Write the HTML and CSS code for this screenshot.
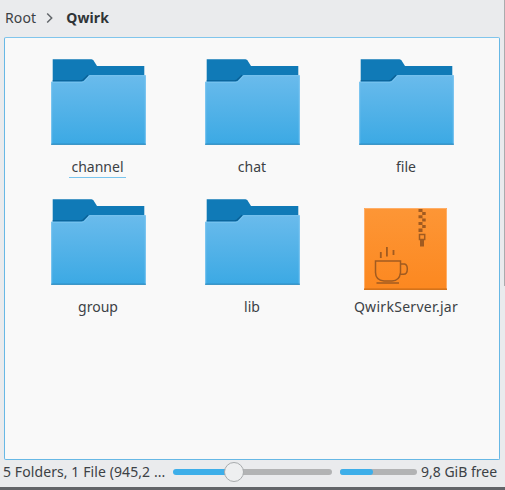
FILE: index.html
```html
<!DOCTYPE html>
<html lang="en">
<head>
<meta charset="utf-8">
<title>Qwirk</title>
<link rel="stylesheet" href="styles.css">
</head>
<body>
<svg class="defs" aria-hidden="true">
  <defs>
    <linearGradient id="blue" x1="0" y1="0" x2="0" y2="1"><stop offset="0" stop-color="#6abbec"/><stop offset="1" stop-color="#3ba9e4"/></linearGradient>
    <linearGradient id="orange" x1="0" y1="0" x2="0" y2="1"><stop offset="0" stop-color="#fd9636"/><stop offset="1" stop-color="#fc8820"/></linearGradient>
    <symbol id="folder" viewBox="0 0 96 87">
      <path d="M2.7 .3H41.5Q43.5 .5 44.5 3L47 7H94.3V40H2.7Z" fill="#107ab7"/>
      <path d="M2.7 21.8H31L33 21L38 16.2" fill="none" stroke="#0a5f94" stroke-width="1.3"/>
      <path d="M1.2 22.7H31.5Q33 22.7 34 21.8L39 16.2H95.8V85.7H1.2Z" fill="url(#blue)"/>
      <path d="M1.7 85V23.2H32Q33.5 23 34.5 22.2L39.5 16.7H95.3V85" fill="none" stroke="#7cc5f0"/>
      <path d="M1.2 85.2H95.8" stroke="#2b86b9"/>
    </symbol>
  </defs>
</svg>
<div class="window">
  <nav class="path">
    <span>Root</span>
    <svg class="chevron" viewBox="0 0 7 12"><path d="M1.2 1.5L5.7 6L1.2 10.5" fill="none" stroke="#62666a" stroke-width="1.5"/></svg>
    <b>Qwirk</b>
  </nav>
  <main class="view">
    <div class="item"><svg class="icon"><use href="#folder"/></svg><span class="name current">channel</span></div>
    <div class="item"><svg class="icon"><use href="#folder"/></svg><span class="name">chat</span></div>
    <div class="item"><svg class="icon"><use href="#folder"/></svg><span class="name">file</span></div>
    <div class="item"><svg class="icon"><use href="#folder"/></svg><span class="name">group</span></div>
    <div class="item"><svg class="icon"><use href="#folder"/></svg><span class="name">lib</span></div>
    <div class="item">
      <svg class="icon" viewBox="0 0 96 87">
        <path d="M6 9H89V91H6Z" fill="url(#orange)"/>
        <path d="M6.5 90V9.5H88.5V90" fill="none" stroke="#ffae67"/>
        <path d="M6 90.2H89" stroke="#c96c19" stroke-width="1.2"/>
        <g fill="#a15b20">
          <path d="M60.5 10h4v3h-4zM64.2 13h3.5v3h-3.5zM60.5 16.2h4v3h-4zM64.2 19.5h3.5v3h-3.5zM60.5 23h4v3h-4zM64.2 26h3.5v3h-3.5zM60.5 29.5h4v3.5h-4z"/>
          <path d="M62 40.5h4v7h-4z"/>
        </g>
        <g fill="none" stroke="#a15b20" stroke-width="1.5">
          <path d="M61.5 35.5h5.2v5h-5.2z"/>
          <path d="M17.5 62H42.5V73.5Q41.5 82 34 82H26Q17.5 81 17.5 73.5ZM42.5 65H46.5Q49.3 65.5 49.3 70Q49.3 75.3 45.5 75.3H42.5M18.5 84H41"/>
          <path d="M22.8 53V59M28.9 48V57.5M35.5 51V56" stroke-width="1.8"/>
        </g>
      </svg>
      <span class="name jar">QwirkServer.jar</span>
    </div>
  </main>
  <footer class="status">
    <span class="summary">5 Folders, 1 File (945,2 ...</span>
    <div class="slider"><i class="thumb"></i></div>
    <div class="space"><i class="used"></i></div>
    <span class="free">9,8 GiB free</span>
  </footer>
</div>
</body>
</html>
```
FILE: styles.css
```css
* { box-sizing: border-box; }
body {
  margin: 0;
  height: 490px;
  overflow: hidden;
  background: linear-gradient(#aaacae, #aaacae) right top / 1px 286px no-repeat, #eaebed;
  color: #3c4145;
  font: 14px/20px "Noto Sans", sans-serif;
}
.defs { position: absolute; width: 0; height: 0; }
.window {
  height: 490px;
  display: flex;
  flex-direction: column;
  border-bottom: 3px solid #626468;
}
.path {
  height: 37px;
  padding: 0 5px 1px;
  display: flex;
  align-items: center;
  white-space: nowrap;
}
.path span { letter-spacing: .15px; }
.path b { color: #303437; letter-spacing: .1px; }
.chevron { width: 7px; height: 12px; margin: 0 13px 1px 10px; }
.view {
  width: 496px;
  height: 423px;
  margin-left: 4px;
  padding: 21px 16px 0;
  border: 1px solid #67b8e5;
  border-top-color: #80c5ec;
  border-radius: 2px;
  background: #f9f9f9;
  display: grid;
  grid-template-columns: repeat(3, 154px);
  grid-auto-rows: 140px;
}
.item { display: flex; flex-direction: column; align-items: center; }
.icon { width: 96px; height: 87px; overflow: visible; }
.name { margin-top: 11px; height: 21px; white-space: nowrap; }
.current { padding: 0 2px; margin-right: 1px; border-bottom: 1px solid #79c4ed; }
.jar { letter-spacing: .3px; }
.status {
  flex: 1;
  display: flex;
  align-items: center;
  padding-left: 3px;
  padding-bottom: 4px;
  white-space: nowrap;
}
.summary { width: 170px; letter-spacing: .09px; }
.summary, .free { padding-top: 1px; }
.slider {
  width: 159px;
  height: 6px;
  padding-left: 51px;
  display: flex;
  align-items: center;
  border-radius: 3px;
  background: linear-gradient(90deg, #3daee9 60px, #b2b3b4 60px);
}
.thumb {
  flex: none;
  width: 20px;
  height: 20px;
  border: 1px solid #a8abad;
  border-radius: 50%;
  background: #eeeff0;
}
.space {
  width: 77px;
  height: 6px;
  margin: 0 4px 0 8px;
  border-radius: 3px;
  background: #b2b3b4;
}
.used { display: block; width: 33px; height: 6px; border-radius: 3px; background: #3daee9; }
```
